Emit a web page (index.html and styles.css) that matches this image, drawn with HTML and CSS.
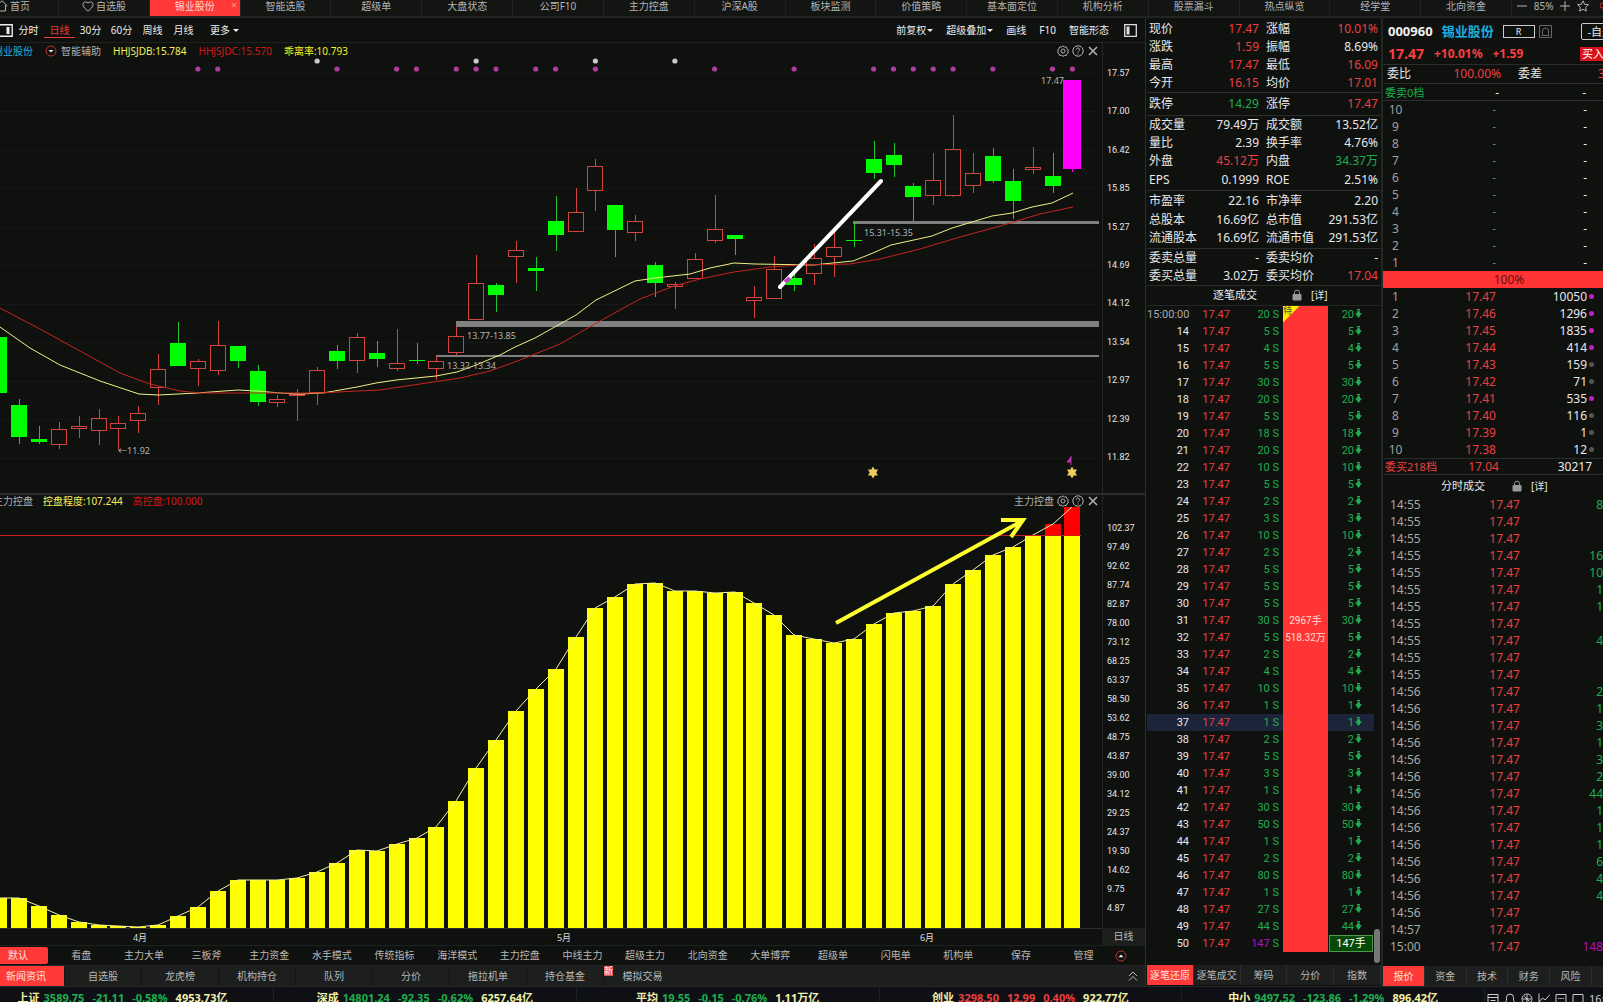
FILE: index.html
```html
<!DOCTYPE html>
<html lang="zh-CN">
<head>
<meta charset="utf-8">
<title>锡业股份 000960</title>
<link rel="stylesheet" href="styles.css">
</head>
<body>
<svg class="defs" aria-hidden="true">
  <symbol id="i-gear" viewBox="0 0 12 12"><path d="M6 .8 7.400 2l1.900-.1.6 1.800 1.500 1.100L10.700 6l.7 1.700-1.500 1-.6 1.800-1.900-.1L6 11.400 4.600 10.400l-1.900.1-.6-1.800-1.500-1L1.300 6 .6 4.800l1.500-1.100.6-1.800 1.900.1z"/><circle cx="6" cy="6" r="2"/></symbol>
  <symbol id="i-help" viewBox="0 0 12 12"><circle cx="6" cy="6" r="5.200"/><path d="M4.300 4.700C4.300 2.400 7.800 2.500 7.700 4.700 7.700 5.800 6 5.900 6 7.300M6 8.400v1"/></symbol>
  <symbol id="i-close" viewBox="0 0 12 12"><path d="M2 2l8 8M10 2l-8 8" stroke-width="1.600"/></symbol>
  <symbol id="i-lock" viewBox="0 0 12 12"><path d="M3.500 6V3.600a2.500 2.500 0 0 1 5 0V6"/><path d="M2 5.500h8V11H2z" fill="currentColor"/></symbol>
</svg>

<nav class="nav" aria-label="主导航">
  <a class="home" href="#"><svg class="ico" viewBox="0 0 12 12"><path d="M.5 6 6 .8 11.500 6M2.500 5v6h7V5"/></svg>首页</a>
  <a href="#"><svg class="ico" viewBox="0 0 12 12"><path d="M6 11C-3 5 2-.5 6 3c4-3.500 9 2 0 8z"/></svg>自选股</a>
  <a class="on" href="#">锡业股份<span class="x">×</span></a>
  <a href="#">智能选股</a><a href="#">超级单</a><a href="#">大盘状态</a><a href="#">公司F10</a><a href="#">主力控盘</a><a href="#">沪深A股</a><a href="#">板块监测</a><a href="#">价值策略</a><a href="#">基本面定位</a><a href="#">机构分析</a><a href="#">股票漏斗</a><a href="#">热点纵览</a><a href="#">经学堂</a><a href="#">北向资金</a>
  <div class="navtools"><svg class="ico" viewBox="0 0 12 12"><path d="M1 6h10"/></svg><span>85%</span><svg class="ico" viewBox="0 0 12 12"><path d="M1 6h10M6 1v10"/></svg><svg class="ico" viewBox="0 0 12 12"><path d="M6 .8 7.600 4.300l3.800.4-2.800 2.600.8 3.800L6 9.200l-3.400 1.900.8-3.800L.6 4.700l3.800-.4z"/></svg><svg class="ico last" viewBox="0 0 12 12"><path d="M.5 1.500h11v7H.5zM3 11h6"/></svg></div>
</nav>

<main class="main">
  <section class="left">
    <div class="toolbar">
      <svg class="pane" viewBox="0 0 13 13"><path d="M-4 .8H12.200V12.200H-4" fill="none" stroke="#eee" stroke-width="1.400"/><path d="M6.500 3h3v7h-3z" fill="#eee"/></svg>
      <button>分时</button><button class="on">日线</button><button>30分</button><button>60分</button><button>周线</button><button>月线</button><button class="more">更多<i class="dn"></i></button>
      <span class="grow"></span>
      <button class="r">前复权<i class="dn"></i></button><button class="r">超级叠加<i class="dn"></i></button><button class="r">画线</button><button class="r">F10</button><button class="r">智能形态</button>
      <svg class="pane" viewBox="0 0 13 13"><path d="M.7.7h11.600v11.600H.7z" fill="none" stroke="#ddd" stroke-width="1.300"/><path d="M2.500 2.500h3v8h-3z" fill="#ddd"/></svg>
    </div>

    <div class="chart price">
      <header class="chead">
        <span class="cyan">锡业股份</span>
        <svg class="ico" viewBox="0 0 12 12"><circle cx="6" cy="6" r="5" stroke="#c0302a"/><path d="M3.500 5h5L6 7.500z" fill="#eee" stroke="none"/></svg>
        <span class="tight">智能辅助</span><span class="yel">HHJSJDB:15.784</span><span class="red">HHJSJDC:15.570</span><span class="yel2">乖离率:10.793</span>
        <span class="grow"></span>
        <span class="tools"><svg class="ico"><use href="#i-gear"/></svg><svg class="ico"><use href="#i-help"/></svg><svg class="ico"><use href="#i-close"/></svg></span>
      </header>
      <svg class="plot" id="price" viewBox="0 57 1102 437" role="img" aria-label="日K线"></svg>
      <div class="axis" id="priceAxis"></div>
    </div>

    <div class="chart ctrl">
      <header class="chead">
        <span>主力控盘</span><span class="yel">控盘程度:107.244</span><span class="red">高控盘:100.000</span>
        <span class="grow"></span>
        <span class="tools"><span>主力控盘</span><svg class="ico"><use href="#i-gear"/></svg><svg class="ico"><use href="#i-help"/></svg><svg class="ico"><use href="#i-close"/></svg></span>
      </header>
      <svg class="plot" id="ctrl" viewBox="0 507 1102 438" role="img" aria-label="主力控盘"></svg>
      <div class="axis" id="ctrlAxis"></div>
      <div class="period">日线</div>
    </div>

    <div class="tabsA">
      <button class="on">默认</button><button>看盘</button><button>主力大单</button><button>三板斧</button><button>主力资金</button><button>水手模式</button><button>传统指标</button><button>海洋模式</button><button>主力控盘</button><button>中线主力</button><button>超级主力</button><button>北向资金</button><button>大单博弈</button><button>超级单</button><button>闪电单</button><button>机构单</button><button>保存</button><button>管理</button>
      <svg class="ico" viewBox="0 0 12 12"><circle cx="6" cy="6" r="5" stroke="#c0302a"/><path d="M3.500 7.200h5L6 4.500z" fill="#eee" stroke="none"/></svg>
    </div>
    <div class="tabsB">
      <button class="on">新闻资讯</button><button>自选股</button><button>龙虎榜</button><button>机构持仓</button><button>队列</button><button>分价</button><button>拖拉机单</button><button>持仓基金</button><button>模拟交易<b class="new">新</b></button>
      <span class="grow"></span>
      <svg class="ico" viewBox="0 0 12 12"><path d="M2 6l4-4 4 4M2 10.500l4-4 4 4"/></svg>
    </div>
  </section>

  <section class="mid">
    <table class="quote">
      <tbody>
        <tr><th>现价</th><td class="up">17.47</td><th>涨幅</th><td class="up">10.01%</td></tr>
        <tr><th>涨跌</th><td class="up">1.59</td><th>振幅</th><td>8.69%</td></tr>
        <tr><th>最高</th><td class="up">17.47</td><th>最低</th><td class="up">16.09</td></tr>
        <tr><th>今开</th><td class="up">16.15</td><th>均价</th><td class="up">17.01</td></tr>
      </tbody>
      <tbody>
        <tr class="solo"><th>跌停</th><td class="down">14.29</td><th>涨停</th><td class="up">17.47</td></tr>
      </tbody>
      <tbody>
        <tr><th>成交量</th><td>79.49万</td><th>成交额</th><td>13.52亿</td></tr>
        <tr><th>量比</th><td>2.39</td><th>换手率</th><td>4.76%</td></tr>
        <tr><th>外盘</th><td class="up">45.12万</td><th>内盘</th><td class="down">34.37万</td></tr>
        <tr><th>EPS</th><td>0.1999</td><th>ROE</th><td>2.51%</td></tr>
      </tbody>
      <tbody>
        <tr class="tall"><th>市盈率</th><td>22.16</td><th>市净率</th><td>2.20</td></tr>
        <tr><th>总股本</th><td>16.69亿</td><th>总市值</th><td>291.53亿</td></tr>
        <tr><th>流通股本</th><td>16.69亿</td><th>流通市值</th><td>291.53亿</td></tr>
      </tbody>
      <tbody>
        <tr><th>委卖总量</th><td>-</td><th>委卖均价</th><td>-</td></tr>
        <tr><th>委买总量</th><td>3.02万</td><th>委买均价</th><td class="up">17.04</td></tr>
      </tbody>
    </table>
    <header class="thead"><h2>逐笔成交</h2><svg class="ico lock"><use href="#i-lock"/></svg><a href="#">[详]</a></header>
    <div class="tickbox">
      <table class="ticks"><tbody id="ticks"></tbody></table>
      <span class="thumb"></span>
    </div>
    <div class="tabsC"><button class="on">逐笔还原</button><button>逐笔成交</button><button>筹码</button><button>分价</button><button>指数</button></div>
  </section>

  <section class="right">
    <div class="title"><b>000960</b><b class="cyan">锡业股份</b><span class="rbox">R</span><svg class="bell" viewBox="0 0 13 13"><path d="M.5.5h12v12H.5zM2.500 10.500h8M3.500 10V6a3 3 0 0 1 6 0v4" fill="none" stroke="#666"/></svg><button class="fav">-自选</button></div>
    <div class="last"><b class="p">17.47</b><b>+10.01%</b><b>+1.59</b><button class="buy">买入</button></div>
    <div class="ratio"><span>委比</span><span class="up">100.00%</span><span>委差</span><span class="up">30217</span></div>
    <div class="sum ask"><span class="lab">委卖0档</span><span class="pr">-</span><span class="vo">-</span></div>
    <table class="book"><tbody id="asks"></tbody></table>
    <div class="full">100%</div>
    <table class="book"><tbody id="bids"></tbody></table>
    <div class="sum bid"><span class="lab">委买218档</span><span class="pr">17.04</span><span class="vo">30217</span></div>
    <header class="thead t2"><h2>分时成交</h2><svg class="ico lock"><use href="#i-lock"/></svg><a href="#">[详]</a></header>
    <table class="mins"><tbody id="mins"></tbody></table>
    <div class="tabsC"><button class="on">报价</button><button>资金</button><button>技术</button><button>财务</button><button>风险</button></div>
  </section>
</main>

<footer class="status">
  <div class="first"><span>上证</span><span class="down">3589.75</span><span class="down">-21.11</span><span class="down">-0.58%</span><span>4953.73亿</span></div>
  <div><span>深成</span><span class="down">14801.24</span><span class="down">-92.35</span><span class="down">-0.62%</span><span>6257.64亿</span></div>
  <div><span>平均</span><span class="down">19.55</span><span class="down">-0.15</span><span class="down">-0.76%</span><span>1.11万亿</span></div>
  <div><span>创业</span><span class="up">3298.50</span><span class="up">12.99</span><span class="up">0.40%</span><span>922.77亿</span></div>
  <div><span>中小</span><span class="down">9497.52</span><span class="down">-123.86</span><span class="down">-1.29%</span><span>896.42亿</span></div>
  <aside>
    <svg class="ico" viewBox="0 0 12 12"><path d="M1 1.500h10v9.500H1zM1 4.500h10M3.500 7.500h5"/></svg>
    <svg class="ico" viewBox="0 0 12 12"><path d="M1 9.500h10L9.500 7.500V4.500a3.500 3.500 0 0 0-7 0v3zM5 11.500h2"/></svg>
    <svg class="ico" viewBox="0 0 12 12"><circle cx="6" cy="6" r="5"/><path d="M6 2v8M2 6h8M3.500 3.500l5 5"/></svg>
    <svg class="ico" viewBox="0 0 12 12"><path d="M1 .5v11M1 9l3.500-4L7 7l4.500-5"/></svg>
    <svg class="ico" viewBox="0 0 12 12"><path d="M1 1.500h10v8H1zM3 5.500h1.500M5.300 5.500h1.500M7.600 5.500h1.500M4 11.500h4"/></svg>
    <svg class="ico" viewBox="0 0 12 12"><path d="M1 1.500h10v8H1zM3 11.500h6"/></svg>
    <span>16:45</span>
  </aside>
</footer>
<script src="app.js"></script>
</body>
</html>
```

FILE: styles.css
```css
* { box-sizing: border-box; }
html { overflow: hidden; }
body {
  margin: 0;
  background: #0f110f;
  color: #e8e8e8;
  font: 12px/18px "Noto Sans", "Noto Sans CJK SC", sans-serif;
  overflow: hidden;
}
button {
  font: inherit; color: inherit; background: none; border: 0; padding: 0; margin: 0;
  white-space: nowrap;
}
a { color: inherit; text-decoration: none; }
h2 { margin: 0; font: inherit; }
table { border-collapse: collapse; width: 100%; table-layout: fixed; }
th, td { padding: 0; font-weight: normal; text-align: left; white-space: nowrap; }
.defs { position: absolute; width: 0; height: 0; }
.ico { width: 12px; height: 12px; flex: none; fill: none; stroke: currentColor; stroke-width: 1; }
.grow { flex: 1; }
.up { color: #ec3f3f; }
.down { color: #1fae4d; }
.cyan { color: #1cb0e0; }

/* top navigation */
.nav { display: flex; height: 18px; border-bottom: 2px solid #222522; background: #131513; font-size: 10px; line-height: 13px; color: #b4b4b4; }
.nav a { flex: 1; display: flex; justify-content: center; gap: 2px; border-right: 1px solid #1e211e; white-space: nowrap; position: relative; }
.nav .home { flex: none; width: 63px; justify-content: flex-start; margin-left: -4px; }
.nav .on { background: #ff3838; color: #ffd8d0; }
.nav .x { position: absolute; right: 3px; top: 0; color: #ff9c90; font-size: 10px; line-height: 11px; }
.navtools { width: 91px; display: flex; align-items: center; justify-content: space-between; gap: 4px; padding-left: 4px; overflow: hidden; height: 12px; }
.navtools .last { margin-right: -4px; }

.main { display: grid; grid-template-columns: minmax(0, 1fr) 237px 220px; }
.left { border-right: 1px solid #2c302c; min-width: 0; }

.toolbar { display: flex; align-items: center; height: 25px; font-size: 10px; color: #eee; padding-right: 8px; border-bottom: 1px solid #1f221f; }
.pane { width: 13px; height: 13px; flex: none; }
.toolbar button { width: 31px; line-height: 14px; }
.toolbar .on { color: #f03a34; border-bottom: 1px solid #f03a34; }
.toolbar .more { width: auto; margin-left: 11px; }
.toolbar .r { width: auto; margin-right: 13px; }
.toolbar .r:last-of-type { margin-right: 15px; }
.dn { display: inline-block; border: 3px solid transparent; border-top-color: currentColor; border-bottom: 0; margin-left: 3px; vertical-align: 2px; }
.toolbar .r .dn { margin-left: 1px; }

.chart { display: grid; grid-template-columns: minmax(0, 1fr) 43px; }
.price { grid-template-rows: 14px auto; }
.ctrl { grid-template-rows: 12px auto; border-top: 2px solid #2b2e2b; margin-top: -1px; }
.chead { display: flex; align-items: center; gap: 10px; font-size: 10px; line-height: 12px; color: #b0b0b0; margin-left: -7px; padding-right: 3px; white-space: nowrap; overflow: visible; }
.price .chead { gap: 12px; padding-top: 2px; }
.price .chead .tight { margin-left: -8px; }
.tools { display: flex; gap: 3px; align-items: center; }
.yel { color: #f4f05a; }
.yel2 { color: #f2f21a; }
.red { color: #d41717; }
.plot { grid-column: 1; width: 100%; display: block; font-size: 9px; }
.axis {
  grid-column: 2; grid-row: 1 / 3; border-left: 1px solid #232623; padding: 24px 0 31px 4px;
  display: flex; flex-direction: column; justify-content: space-between;
  font: 9px/12px Roboto, "Noto Sans", sans-serif; color: #e6e6e6;
}
.ctrl .axis { padding: 27px 0 31px 4px; }
.period { grid-column: 2; grid-row: 2; align-self: end; height: 17px; background: #1c1f1c; color: #bbb; font-size: 10px; line-height: 17px; text-align: center; }

.tabsA, .tabsB { display: flex; align-items: center; font-size: 10px; line-height: 17px; color: #b8b8b8; }
.tabsA { height: 20px; border-top: 1px solid #1c2122; }
.tabsA button { flex: 63 1 0; }
.tabsA .on { flex: 0 0 48px; margin-right: 2px; padding-right: 12px; background: #ff3838; color: #ffe4dc; border-radius: 0 2px 2px 0; }
.tabsA .ico { margin: 0 18px 0 0; }
.tabsB { height: 21px; background: #1c1f1d; border-top: 1px solid #232623; }
.tabsB button { width: 77px; line-height: 20px; border-right: 1px solid #131513; position: relative; }
.tabsB .on { width: 65px; padding-right: 12px; padding-left: 0; background: #ff3838; color: #ffe4dc; }
.tabsB button:nth-last-of-type(1) { border: 0; }
.tabsB .ico { margin-right: 6px; }
.new { position: absolute; left: 0; top: 0; background: #e8504c; color: #fff; font-size: 9px; line-height: 10px; font-weight: normal; }

/* quote summary */
.mid { border-right: 2px solid #232623; padding-left: 1px; min-width: 0; }
.quote { margin-top: 2px; }
.quote th { width: 46px; padding-left: 2px; }
.quote td { text-align: right; padding-right: 3px; }
.quote td:nth-child(2) { padding-right: 5px; }
.quote tr { height: 18px; }
.quote tr.tall { height: 21px; }
.quote tr.solo { height: 23px; }
.quote tbody { border-bottom: 1px solid #2a2d2a; }
.quote tbody:nth-child(3) tr:last-child { height: 20px; }
.quote tbody:nth-child(4) tr:last-child { height: 19px; }
.thead { display: flex; align-items: center; height: 20px; font-size: 11px; padding-left: 66px; border-bottom: 1px solid #232623; }
.thead .ico { margin: 0 8px 0 34px; color: #999; }
.thead a { font-size: 10px; }

.tickbox { position: relative; padding: 0 7px 13px 0; }
.ticks { font: 11px/17px Roboto, "Noto Sans CJK SC", sans-serif; }
.ticks tr { height: 17px; }
.ticks td { text-align: right; color: #1fae4d; }
.ticks .t { width: 42px; color: #e8e8e8; }
.ticks tr:first-child .t { color: #aaa; }
.ticks .p { width: 41px; color: #ec3f3f; }
.ticks .s { width: 53px; padding-right: 4px; }
.ticks .n { width: 45px; background: #ff3535; color: #ffdcd4; text-align: center; position: relative; font-size: 10px; }
.ticks .v { padding-right: 12px; }
.ticks .hot { background: #1b2438; }
.ticks .big { color: #b010c8; }
.flag { position: absolute; left: 0; top: 0; width: 17px; height: 17px; background: #fff000; color: #553; font-size: 9px; line-height: 11px; clip-path: polygon(0 0, 100% 0, 0 100%); text-align: left; }
.ar { width: 7px; height: 9px; margin-left: 1px; fill: #1fae4d; }
.ticks .box { display: block; margin-right: -11px; margin-left: 1px; line-height: 15px; background: #064a06; border: 1px solid #4d9a4d; color: #fff; text-align: center; }
.thumb { position: absolute; right: 1px; bottom: 2px; width: 6px; height: 34px; border-radius: 3px; background: #777; }

.tabsC { display: flex; height: 20px; background: #1c1f1d; font-size: 10px; line-height: 20px; color: #b8b8b8; }
.tabsC button { flex: 1; border-right: 1px solid #2a2d2a; }
.tabsC .on { background: #ff3838; color: #ffe4dc; }

/* order book */
.right { min-width: 0; overflow: hidden; display: flex; flex-direction: column; }
.title, .last { display: flex; align-items: center; padding-left: 5px; white-space: nowrap; }
.title { height: 26px; font-size: 13px; gap: 9px; }
.title b:first-child { color: #f2f2f2; }
.rbox { width: 32px; border: 1px solid #ccc; font-size: 9px; line-height: 11px; text-align: center; }
.bell { width: 13px; height: 13px; margin-left: -5px; }
.fav, .buy { margin-left: auto; margin-right: -16px; flex: none; }
.fav { border: 1px solid #ccc; border-radius: 2px; padding: 0 5px; font-size: 11px; line-height: 15px; }
.last { height: 21px; gap: 10px; font-size: 12px; color: #ff3d3d; border-bottom: 1px solid #2a2d2a; }
.last .p { font-size: 14px; }
.last .buy { background: #d8121a; color: #fff; line-height: 14px; font-size: 11px; padding: 0 15px 0 2px; }
.ratio { display: flex; height: 19px; padding: 0 0 0 4px; border-bottom: 1px solid #2a2d2a; white-space: nowrap; }
.ratio span:nth-child(2) { width: 90px; flex: none; text-align: right; }
.ratio span:nth-child(1), .ratio span:nth-child(3) { width: 24px; flex: none; }
.ratio span:nth-child(3) { margin-left: 17px; }
.ratio span:nth-child(4) { margin-left: 56px; }
.sum { display: flex; padding-left: 2px; line-height: 17px; }
.sum .lab { width: 66px; }
.sum .pr { width: 48px; text-align: right; }
.sum .vo { width: 93px; text-align: right; }
.ask { height: 17px; border-bottom: 1px solid #2a2d2a; font-size: 12px; }
.ask .lab { color: #1fae4d; font-size: 11px; }
.ask .vo { width: 87px; }
.bid { height: 17px; border-top: 1px solid #2a2d2a; border-bottom: 1px solid #2a2d2a; line-height: 15px; }
.bid .lab, .bid .pr { color: #ec3f3f; }
.bid .lab { font-size: 11px; }
.book tr, .mins tr { height: 17px; }
.book, .mins { line-height: 17px; }
.book td:nth-child(1) { width: 25px; text-align: center; color: #a0a0a0; }
.book td:nth-child(2) { width: 88px; text-align: right; color: #ec3f3f; }
.book td:nth-child(3) { width: 91px; text-align: right; }
#asks td:nth-child(2) { color: #4a8a66; }
.book td:nth-child(4) { padding-left: 2px; }
.dot { display: block; width: 5px; height: 5px; border-radius: 50%; background: #c020c0; }
.dot.dim { background: #555; }
.full { height: 17px; line-height: 17px; background: #ff3535; color: #5e1010; text-align: center; padding-left: 32px; }
.t2 { padding-left: 58px; height: 21px; border: 0; }
.mins td:nth-child(1) { width: 45px; padding-left: 7px; color: #a8a8a8; }
.mins td:nth-child(2) { width: 92px; text-align: right; color: #ec3f3f; }
.mins td:nth-child(3) { text-align: right; color: #1fae4d; }
.mins tr:last-child td:nth-child(3) { color: #b010c8; }
.t2 .ico { margin-left: 26px; }
.right .tabsC { margin-top: auto; padding-right: 11px; }

.status { display: flex; height: 24px; border-top: 1px solid #262926; background: #0e1015; font-size: 11px; font-weight: bold; line-height: 22px; color: #f4f0a8; overflow: hidden; }
.status div { flex: 1; display: flex; justify-content: center; gap: 8px; border-right: 1px solid #1d1f26; white-space: nowrap; }
.status span:nth-child(2) { margin-left: -4px; }
.status .first { flex: none; width: 274px; padding-right: 28px; }
.status aside { width: 118px; display: flex; gap: 5px; padding: 6px 0 0 2px; line-height: 12px; color: #ccc; font-weight: normal; overflow: hidden; }
```

FILE: app.js
```js
const STEP = 19.875, X0 = 19;
const x = i => X0 + STEP * i;
const by = id => document.getElementById(id);

// [direction, high, body top, body bottom, low]
const candles = [
  ['g',337,337,393,393],['g',399,405,437,444],['g',426,439,442,444],['r',422,429,445,449],['r',416,426,429,438],
  ['r',409,418,431,445],['r',416,423,429,450],['r',406,413,421,433],['r',354,369,388,405],['g',322,343,366,366],
  ['r',359,361,369,386],['r',321,345,371,375],['g',346,346,361,368],['g',365,371,402,406],['r',395,399,403,407],
  ['r',389,394,396,421],['r',367,370,393,405],['g',345,351,361,369],['r',333,337,361,373],['g',341,353,359,367],
  ['r',329,363,369,371],['g',343,360,361,364],['r',356,361,369,380],['r',326,336,353,356],['r',255,283,320,320],
  ['g',283,285,295,312],['r',241,250,257,283],['g',257,268,271,291],['g',196,221,235,251],['r',188,212,232,232],
  ['r',159,166,191,211],['g',205,205,230,257],['r',215,221,233,241],['g',262,265,283,297],['r',282,284,287,309],
  ['r',253,259,279,279],['r',195,229,241,243],['g',235,235,239,255],['r',286,297,301,318],['r',256,269,299,299],
  ['g',270,278,285,291],['r',244,258,274,285],['r',232,247,257,277],['g',222,240,241,247],['g',141,159,173,179],
  ['g',143,155,165,177],['g',183,186,197,221],['r',153,180,196,205],['r',115,149,196,197],['r',153,173,186,193],
  ['g',148,156,181,183],['g',169,181,201,219],['r',147,167,170,174],['g',153,176,186,193],['m',80,80,169,172]
];

let s = '';
for (let k = 0; k < 11; k++) {
  s += `<path d="M0 ${Math.round(73 + k * 38.45)}.5H1099" stroke="#161916"/>`;
}
s += `<g fill="#808080"><path d="M853 221h246v3H853zM456 321h643v6H456zM436 355h663v2H436z"/></g>`;
candles.forEach(([c, h, t, b, l], k) => {
  const cx = Math.round(x(k - 1)), col = { g: '#00ff00', r: '#d2443f', m: '#ff00ff' }[c];
  const wick = c === 'g' ? '#22c52a' : col;
  s += `<path d="M${cx}.5 ${h}V${t}M${cx}.5 ${b}V${l}" stroke="${wick}"/>`;
  if (c === 'r') s += `<rect x="${cx - 7.5}" y="${t + .5}" width="15" height="${Math.max(b - t - 1, 1)}" fill="none" stroke="${col}"/>`;
  else { const w = c === 'm' ? 9 : 8; s += `<rect x="${cx - w}" y="${t}" width="${2 * w}" height="${b - t}" fill="${col}"/>`; }
});
s += `<polyline fill="none" stroke="#f0f080" points="0,327 30,348 60,365 100,381 139,394 158,395 178,394 197,393 238,390 257,391 280,393 300,394 323,393 340,390 357,387 376,383 396,380 416,378 436,376 457,372 476,365 500,355 515,347 535,338 560,324 576,315 596,300 635,281 655,278 690,274 710,268 734,263 755,264 813,265 853,261 873,253 891,245 932,236 952,228 992,216 1012,213 1032,207 1052,203 1073,193"/>`;
s += `<polyline fill="none" stroke="#c82420" points="0,308 40,329 80,351 120,373 150,384 180,391 200,393 260,393 320,393 357,391 380,390 420,384 460,378 490,371 520,360 560,344 600,321 640,299 674,286 700,279 734,272 770,267 800,265 850,264 880,259 920,249 960,237 1000,226 1040,214 1073,207"/>`;
[9,10,16,19,20,22,23,24,26,27,29,35,39,43,44,45,46,47,49,52,53].forEach(i => { s += `<circle cx="${x(i)}" cy="69" r="2.600" fill="#b03aa0"/>`; });
[15,23,29,33].forEach(i => { s += `<circle cx="${x(i)}" cy="61" r="2.600" fill="#c8c8c8"/>`; });
s += `<path d="M780 287 881 181" stroke="#fff" stroke-width="4" stroke-linecap="round"/><path d="M785 282l5-4" stroke="#c040c0" stroke-width="4"/>`;
[873, 1072].forEach(c => { s += `<path d="M${c} 466.500l1.700 3h3.300l-1.700 3 1.700 3h-3.300l-1.700 3-1.700-3h-3.300l1.700-3-1.700-3h3.300z" fill="#f0cc60"/>`; });
s += `<path d="M1071 456v9M1071 457l-4 5h4" fill="#c030b0" stroke="#c030b0"/>`;
s += `<g fill="#b4b4b4"><text x="864" y="236">15.31-15.35</text><text x="467" y="339">13.77-13.85</text><text x="447" y="369">13.32-13.34</text><text x="1041" y="84">17.47</text><text x="118" y="454">←11.92</text></g>`;
by('price').innerHTML = s;

const tops = [898,898,906,915,922,925,926,927,925,916,907,891,880,880,880,878,872,863,850,851,844,838,827,801,768,740,711,689,669,637,608,597,584,583,591,591,593,592,603,615,635,639,643,639,624,613,611,606,584,570,555,547,535,524,507];
s = '';
tops.forEach((t, k) => {
  const left = Math.round(x(k - 1)) - 8;
  if (t < 535) s += `<rect x="${left}" y="${t}" width="16" height="${535 - t}" fill="#ff0000"/>`;
  const y = Math.max(t, 535);
  s += `<rect x="${left}" y="${y}" width="16" height="${928 - y}" fill="#ffff00"/>`;
});
s += `<polyline fill="none" stroke="#f4f4a0" points="${tops.map((t, k) => Math.round(x(k - 1)) + ',' + t).join(' ')}"/>`;
s += `<path d="M0 535.500H1081" stroke="#c81e1e"/>`;
s += `<path d="M836 623 1022 521M1001 520H1023L1011 537" fill="none" stroke="#ffff30" stroke-width="4"/>`;
s += `<path d="M0 928.500H1102" stroke="#2b2e2b"/>`;
[[140, '4月'], [564, '5月'], [927, '6月']].forEach(([c, m]) => { s += `<text x="${c}" y="941" text-anchor="middle" fill="#ddd">${m}</text>`; });
by('ctrl').innerHTML = s;

const labels = a => a.split(' ').map(v => `<span>${v}</span>`).join('');
by('priceAxis').innerHTML = labels('17.57 17.00 16.42 15.85 15.27 14.69 14.12 13.54 12.97 12.39 11.82');
by('ctrlAxis').innerHTML = labels('102.37 97.49 92.62 87.74 82.87 78.00 73.12 68.25 63.37 58.50 53.62 48.75 43.87 39.00 34.12 29.25 24.37 19.50 14.62 9.75 4.87');

const arrow = '<svg class="ar" viewBox="0 0 7 9"><path d="M2 0h3v1.500H2zM2 2.200h3v2h2L3.500 9 0 4.200h2z"/></svg>';
const lots = [20,5,4,5,30,20,5,18,20,10,5,2,3,10,2,5,5,5,30,5,2,4,10,1,1,2,5,3,1,30,50,1,2,80,1,27,44,147];
by('ticks').innerHTML = lots.map((v, i) => {
  const sec = i ? 13 + i : '15:00:00';
  const net = i === 0 ? '<span class="flag">特</span>' : sec === 31 ? '2967手' : sec === 32 ? '518.32万' : '';
  const vol = v === 147 ? '<span class="box">147手</span>' : v + arrow;
  return `<tr${sec === 37 ? ' class="hot"' : ''}><td class="t">${sec}</td><td class="p">17.47</td><td class="s">${v === 147 ? '<span class="big">147</span>' : v} S</td><td class="n">${net}</td><td class="v">${vol}</td></tr>`;
}).join('');

by('asks').innerHTML = [10,9,8,7,6,5,4,3,2,1].map(n => `<tr><td>${n}</td><td>-</td><td>-</td><td></td></tr>`).join('');
by('bids').innerHTML = [10050,1296,1835,414,159,71,535,116,1,12].map((v, i) =>
  `<tr><td>${i + 1}</td><td>${(17.47 - i / 100).toFixed(2)}</td><td>${v}</td><td><span class="dot${v > 400 ? '' : ' dim'}"></span></td></tr>`).join('');

const mins = [8,'','',16,10,1,1,'',4,'','',2,1,3,1,3,2,44,1,1,1,6,4,4,'','',148];
by('mins').innerHTML = mins.map((v, i) =>
  `<tr><td>${i < 11 ? '14:55' : i < 25 ? '14:56' : i === 25 ? '14:57' : '15:00'}</td><td>17.47</td><td>${v}</td></tr>`).join('');
```
